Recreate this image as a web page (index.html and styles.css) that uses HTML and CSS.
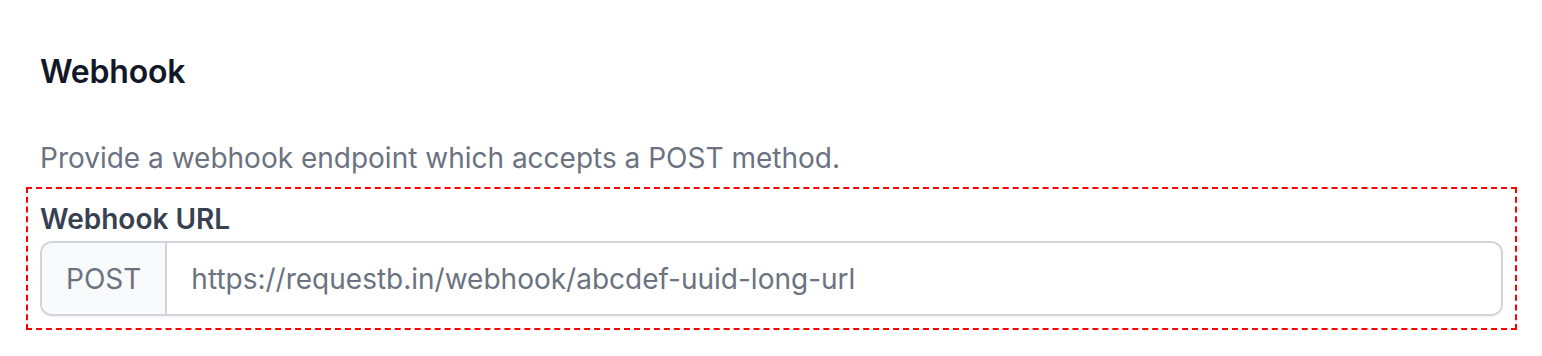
FILE: index.html
```html
<!DOCTYPE html>
<html lang="en">
<head>
    <meta charset="UTF-8">
    <meta name="viewport" content="width=device-width, initial-scale=1.0">
    <title>Webhook</title>
    <link rel="stylesheet" href="styles.css">
</head>
<body>
    <section class="webhook">
        <h2>Webhook</h2>
        <p class="hint">Provide a webhook endpoint which accepts a POST method.</p>

        <div class="field">
            <label for="webhookUrl">Webhook URL</label>
            <div class="input-group">
                <span class="addon">POST</span>
                <input type="text" id="webhookUrl" value="https://requestb.in/webhook/abcdef-uuid-long-url">
            </div>
        </div>
    </section>
</body>
</html>
```

FILE: styles.css
```css
:root {
    --text-dark: #111827;
    --text-label: #374151;
    --text-muted: #6b7280;
    --border: #d1d5db;
    --addon-bg: #f9fafb;
}

* {
    box-sizing: border-box;
    margin: 0;
    padding: 0;
}

body {
    font-family: Inter, 'Noto Sans', sans-serif;
    background: #fff;
    color: var(--text-dark);
}

.webhook {
    padding: 48px 39px 0 40px;
}

h2 {
    font-size: 32px;
    line-height: 48px;
    font-weight: 600;
    letter-spacing: -0.2px;
    color: var(--text-dark);
}

.hint {
    margin-top: 42px;
    font-size: 28px;
    line-height: 40px;
    color: var(--text-muted);
}

/* dashed frame around the field */
.field {
    margin: 9px -14px 0 -14px;
    padding: 10px 12px 12px 12px;
    border: 2px dashed #ff0000;
}

label {
    display: block;
    font-size: 28px;
    line-height: 40px;
    font-weight: 600;
    color: var(--text-label);
}

.input-group {
    margin-top: 2px;
    display: flex;
    height: 75px;
    border: 2px solid var(--border);
    border-radius: 12px;
    overflow: hidden;
    box-shadow: 0 1px 2px rgba(0, 0, 0, 0.05);
}

.addon {
    display: flex;
    align-items: center;
    padding: 0 24px;
    background: var(--addon-bg);
    border-right: 2px solid var(--border);
    font-size: 28px;
    color: var(--text-muted);
}

.input-group input {
    flex: 1;
    border: none;
    outline: none;
    padding: 0 24px;
    font-family: inherit;
    font-size: 28px;
    color: var(--text-muted);
    background: #fff;
}
```
